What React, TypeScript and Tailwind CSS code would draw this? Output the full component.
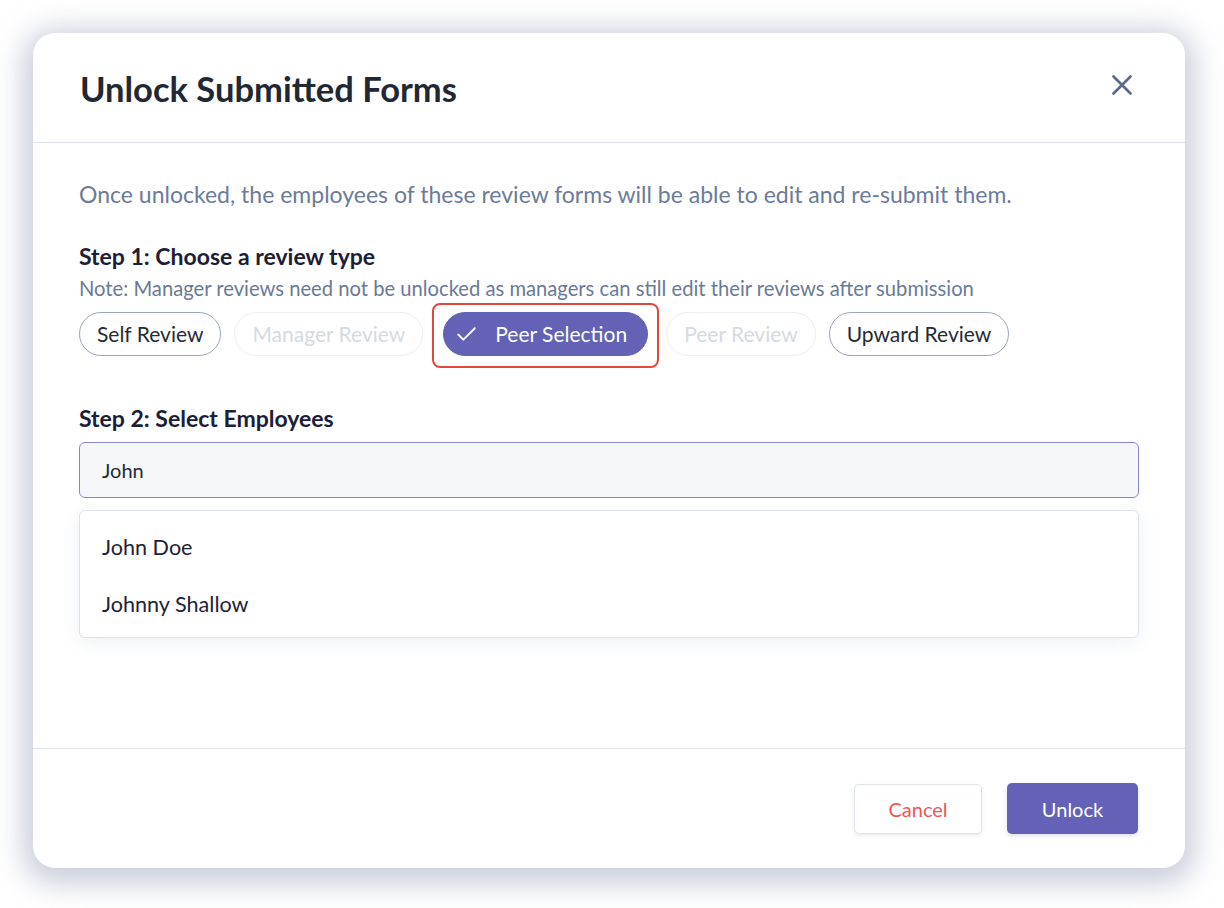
import { Check } from 'lucide-react';

const PILLS = [
  { label: 'Self Review', state: 'idle' },
  { label: 'Manager Review', state: 'disabled' },
  { label: 'Peer Selection', state: 'active' },
  { label: 'Peer Review', state: 'disabled' },
  { label: 'Upward Review', state: 'idle' },
] as const;

function Pill({ label, state }: { label: string; state: 'idle' | 'disabled' | 'active' }) {
  if (state === 'active') {
    return (
      <div className="relative ml-[7px] mr-[5px]">
        {/* highlight annotation */}
        <div className="pointer-events-none absolute -top-[9px] -bottom-[12px] -left-[11px] -right-[11px] rounded-[8px] border-[2.5px] border-[#e2493b]" />
        <button
          type="button"
          className="flex h-[44px] items-center gap-[16px] rounded-full border border-[#6462b6] bg-[#6462b6] pl-[10px] pr-[20px] text-[21px] text-white"
        >
          <Check size={25} strokeWidth={1.7} />
          {label}
        </button>
      </div>
    );
  }
  const cls =
    state === 'disabled'
      ? 'border-[#eceef2] text-[#d5dae2]'
      : 'border-[#9aa7bd] text-[#252b36]';
  return (
    <button
      type="button"
      className={`flex h-[44px] items-center rounded-full border px-[17px] text-[21px] ${cls}`}
    >
      {label}
    </button>
  );
}

export default function App() {
  return (
    <div className="min-h-screen bg-white p-[33px] pr-[39px] pb-[40px] font-['Lato','Noto_Sans',sans-serif]">
      <div className="flex h-[835px] w-[1152px] flex-col rounded-[22px] bg-white shadow-[0_6px_28px_10px_rgba(160,167,190,0.55)]">
        {/* header */}
        <div className="flex h-[110px] items-center justify-between border-b border-[#dfe3e9] pl-[47px] pr-[53px]">
          <h1 className="mt-[3px] text-[34.5px] font-bold leading-[40px] text-[#212833]">Unlock Submitted Forms</h1>
          <button type="button" className="-mt-[6px] text-[#5a6a85]" aria-label="Close">
            <svg width="20" height="20" viewBox="0 0 20 20" fill="none" stroke="currentColor" strokeWidth="2.6" strokeLinecap="round">
              <path d="M1.5 1.5l17 17M18.5 1.5l-17 17" />
            </svg>
          </button>
        </div>

        {/* body */}
        <div className="flex-1 px-[46px] pt-[37px]">
          <p className="text-[23px] leading-[28px] text-[#6b7b99]">
            Once unlocked, the employees of these review forms will be able to edit and re-submit them.
          </p>

          <h2 className="mt-[34px] text-[23px] font-bold leading-[28px] text-[#1c2036]">
            Step 1: Choose a review type
          </h2>
          <p className="mt-[6px] text-[20.2px] leading-[24px] text-[#6a7a96]">
            Note: Manager reviews need not be unlocked as managers can still edit their reviews after submission
          </p>
          <div className="mt-[12px] flex items-center gap-[13px]">
            {PILLS.map((p) => (
              <Pill key={p.label} label={p.label} state={p.state} />
            ))}
          </div>

          <h2 className="mt-[48px] text-[23px] font-bold leading-[28px] text-[#1c2036]">
            Step 2: Select Employees
          </h2>
          <div className="mt-[10px] flex h-[56px] items-center rounded-[6px] border border-[#8785d3] bg-[#f6f7f9] px-[22px] text-[20px] text-[#252b36]">
            John
          </div>
          <div className="mt-[12px] rounded-[6px] border border-[#dde1e8] bg-white pt-[8px] pb-[4px] shadow-[0_4px_18px_rgba(160,170,195,0.18)]">
            {['John Doe', 'Johnny Shallow'].map((name) => (
              <div key={name} className="flex h-[57px] items-center px-[22px] text-[21.6px] text-[#1e2238]">
                {name}
              </div>
            ))}
          </div>
        </div>

        {/* footer */}
        <div className="flex h-[120px] items-center justify-end gap-[25px] border-t border-[#dfe3e9] pr-[47px]">
          <button
            type="button"
            className="h-[50px] w-[128px] rounded-[5px] border border-[#dfe3ea] bg-white text-[20px] text-[#f05656] shadow-[0_2px_4px_rgba(160,170,195,0.2)]"
          >
            Cancel
          </button>
          <button
            type="button"
            className="h-[51px] w-[131px] rounded-[5px] bg-[#6462b6] text-[20px] text-white shadow-[0_2px_4px_rgba(100,98,182,0.2)]"
          >
            Unlock
          </button>
        </div>
      </div>
    </div>
  );
}
